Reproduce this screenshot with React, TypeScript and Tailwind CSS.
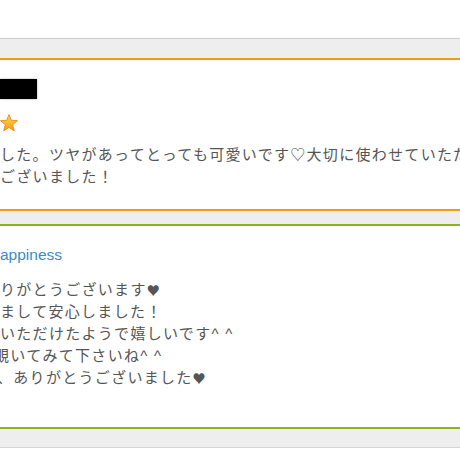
import React from "react";

const jp = "font-['Liberation_Sans','Noto_Sans_CJK_JP',sans-serif]";

function Heart() {
  return <span className="font-['Noto_Sans_CJK_JP',sans-serif] text-[13px] text-[#555555]">♥</span>;
}

const replyLines = [
  { key: "l1", body: <>りがとうございます<Heart /></>, shift: "ml-0" },
  { key: "l2", body: <>まして安心しました！</>, shift: "ml-0" },
  { key: "l3", body: <>いただけたようで嬉しいです^ ^</>, shift: "ml-0" },
  { key: "l4", body: <>覗いてみて下さいね^ ^</>, shift: "-ml-[6px]" },
  { key: "l5", body: <>、ありがとうございました<Heart /></>, shift: "-ml-[3px]" },
];

function Star() {
  return (
    <svg width="18" height="18" viewBox="0 0 18 18" className="block">
      <defs>
        <linearGradient id="starFill" x1="0" y1="0" x2="0" y2="1">
          <stop offset="0%" stopColor="#ffd957" />
          <stop offset="100%" stopColor="#f59a16" />
        </linearGradient>
      </defs>
      <polygon
        points="9,0.6 11.3,6.3 17.5,6.7 12.7,10.7 14.3,16.9 9,13.4 3.7,16.9 5.3,10.7 0.5,6.7 6.7,6.3"
        fill="url(#starFill)"
        stroke="#e88d0e"
        strokeWidth="0.9"
        strokeLinejoin="round"
      />
    </svg>
  );
}

export default function App() {
  return (
    <div className={`h-[460px] w-[460px] overflow-hidden bg-white ${jp}`}>
      <div className="h-[38px]" />
      <div className="border-y border-t-[#cccccc] border-b-[#d4d4d4] bg-[#eeeeee] pt-[19px] pb-[18px]">
        {/* review */}
        <div className="h-[153px] border-y-2 border-[#f39a12] bg-white pt-[19px]">
          <div className="h-[20px] w-[37px] bg-black shadow-[0_0_2px_rgba(0,0,0,0.35)]" />
          <div className="mt-[15px] h-[18px]">
            <Star />
          </div>
          <div className="mt-[12px] text-[15px] leading-[22px] tracking-[1.3px] text-[#555555]">
            <p className="whitespace-nowrap">した。ツヤがあってとっても可愛いです♡大切に使わせていただ</p>
            <p className="whitespace-nowrap">ございました！</p>
          </div>
        </div>

        {/* shop reply */}
        <div className="mt-[13px] h-[205px] border-y-2 border-[#8db31c] bg-white pt-[18px]">
          <p className="text-[15.5px] leading-[22px] text-[#3a8cc6]">appiness</p>
          <div className="mt-[13px] text-[15px] leading-[22px] tracking-[1.3px] text-[#555555]">
            {replyLines.map((line) => (
              <p key={line.key} className={`whitespace-nowrap ${line.shift}`}>
                {line.body}
              </p>
            ))}
          </div>
        </div>
      </div>
    </div>
  );
}
